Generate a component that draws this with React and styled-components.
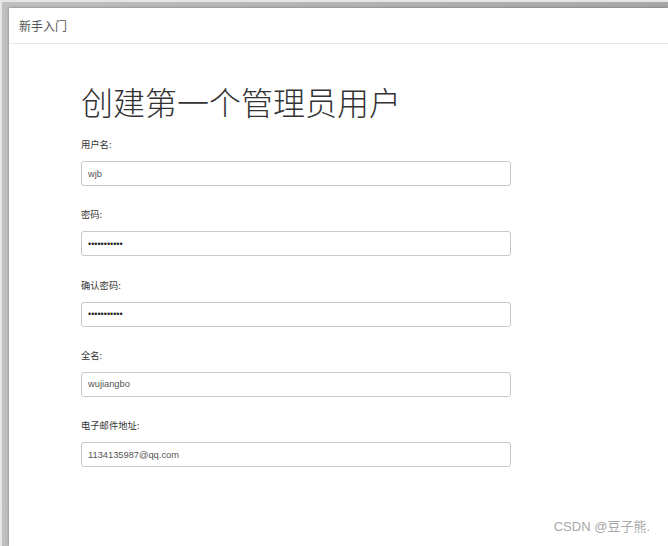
import React from 'react';
import styled, { createGlobalStyle } from 'styled-components';

const GlobalStyle = createGlobalStyle`
  html, body {
    margin: 0;
    padding: 0;
    height: 100%;
    overflow: hidden;
  }
  body {
    font-family: "Liberation Sans", "Noto Sans CJK SC", sans-serif;
    color: #333;
  }
  #root {
    height: 100%;
  }
`;

const Frame = styled.div`
  box-sizing: border-box;
  height: 546px;
  width: 668px;
  background: linear-gradient(90deg, #c0c0c0, #a8a8a8);
  border-top: 2px solid #e6e6e6;
  border-left: 2px solid #e6e6e6;
  padding: 6px 0 0 7px;
  display: flex;
`;

const Window = styled.div`
  flex: 1;
  background: #fff;
  box-shadow: 0 0 3px rgba(0, 0, 0, 0.35);
  display: flex;
  flex-direction: column;
  position: relative;
`;

const Header = styled.div`
  box-sizing: border-box;
  height: 36px;
  border-bottom: 1px solid #e5e5e5;
  padding: 0 10px;
  display: flex;
  align-items: center;
  font-size: 12px;
  color: #555;
  font-family: "Noto Sans CJK SC", sans-serif;
`;

const Content = styled.div`
  padding: 37px 0 0 72px;
`;

const Title = styled.h1`
  margin: 0 0 17px;
  font-family: "Noto Sans CJK SC", sans-serif;
  font-weight: 300;
  font-size: 32px;
  line-height: 40px;
  color: #333;
`;

const Field = styled.div`
  margin-bottom: 22.3px;
`;

const Label = styled.label`
  display: block;
  font-family: "Noto Sans CJK SC", sans-serif;
  font-size: 9.3px;
  line-height: 12px;
  color: #333;
  margin-bottom: 11px;
`;

const Input = styled.input`
  box-sizing: border-box;
  display: block;
  width: 430px;
  height: 25px;
  padding: 0 6px;
  border: 1px solid #c3c9ce;
  border-radius: 3px;
  font-family: "Liberation Sans", sans-serif;
  font-size: ${(p) => (p.type === 'password' ? '9px' : '9.3px')};
  color: ${(p) => (p.type === 'password' ? '#222' : '#555')};
  background: #fff;
  outline: none;
`;

const Watermark = styled.div`
  position: absolute;
  right: 18px;
  bottom: 11px;
  font-family: "Liberation Sans", "Noto Sans CJK SC", sans-serif;
  font-size: 13px;
  color: #a8a8a8;
`;

const fields = [
  { label: '用户名:', type: 'text', value: 'wjb' },
  { label: '密码:', type: 'password', value: '12345678901' },
  { label: '确认密码:', type: 'password', value: '12345678901' },
  { label: '全名:', type: 'text', value: 'wujiangbo' },
  { label: '电子邮件地址:', type: 'text', value: '1134135987@qq.com' },
];

export default function App() {
  return (
    <>
      <GlobalStyle />
      <Frame>
        <Window>
          <Header>新手入门</Header>
          <Content>
            <Title>创建第一个管理员用户</Title>
            {fields.map((f) => (
              <Field key={f.label}>
                <Label>{f.label}</Label>
                <Input type={f.type} defaultValue={f.value} />
              </Field>
            ))}
          </Content>
          <Watermark>CSDN @豆子熊.</Watermark>
        </Window>
      </Frame>
    </>
  );
}
